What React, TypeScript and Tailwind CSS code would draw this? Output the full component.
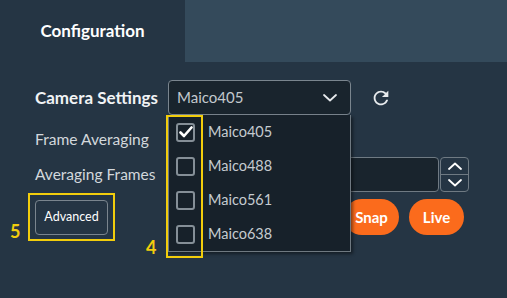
import React from 'react';
import { MdRefresh } from 'react-icons/md';

const options = ['Maico405', 'Maico488', 'Maico561', 'Maico638'];

function Chevron({ up = false, className = '' }: { up?: boolean; className?: string }) {
    return (
        <svg width="14" height="8" viewBox="0 0 14 8" className={className} fill="none">
            <polyline
                points={up ? '1,7 7,1.5 13,7' : '1,1 7,6.5 13,1'}
                stroke="currentColor"
                strokeWidth="1.8"
                strokeLinecap="round"
                strokeLinejoin="round"
            />
        </svg>
    );
}

function Checkbox({ checked }: { checked: boolean }) {
    return (
        <div className="w-[19px] h-[19px] rounded-[3px] border-2 border-[#858f97] flex items-center justify-center">
            {checked && (
                <svg width="14" height="12" viewBox="0 0 14 12" fill="none">
                    <polyline points="1.5,6.5 5,10 12.5,1.5" stroke="white" strokeWidth="2.6" strokeLinecap="round" strokeLinejoin="round" />
                </svg>
            )}
        </div>
    );
}

export default function App() {
    return (
        <div className="w-[507px] h-[298px] bg-[#253544] font-['Lato',sans-serif] relative overflow-hidden">
            <div className="flex h-[62px]">
                <div className="w-[185px] flex items-center justify-center text-[17px] font-bold text-white">Configuration</div>
                <div className="flex-1 bg-[#344a5b]" />
            </div>

            <div className="pl-[35px] pt-[18px] flex flex-col">
                <div className="flex items-center h-[35px]">
                    <div className="w-[133px] text-[17px] font-bold text-[#f1f3f5]">Camera Settings</div>
                    <div className="relative z-20">
                        <div className="w-[183px] h-[35px] rounded-[4px] border border-[#7a858e] bg-[#19242d] flex items-center justify-between pl-[8px] pr-[13px]">
                            <span className="text-[15px] text-[#c3c9ce]">Maico405</span>
                            <Chevron className="text-[#e6e9ec]" />
                        </div>
                        <div className="absolute left-0 top-full w-[183px] bg-[#17212a] border border-t-0 border-[#6f7981] shadow-[2px_2px_3px_rgba(0,0,0,0.45)]">
                            {options.map((o, i) => (
                                <div key={o} className="h-[34px] flex items-center pl-[7px] gap-[13px]">
                                    <Checkbox checked={i === 0} />
                                    <span className="text-[14.5px] text-[#c5cbd0]">{o}</span>
                                </div>
                            ))}
                        </div>
                    </div>
                    <MdRefresh size={22} className="ml-[19px] text-[#e8ebee]" />
                </div>

                <div className="flex items-center h-[34px] mt-[8px]">
                    <div className="text-[15.6px] text-[#d3d8dc]">Frame Averaging</div>
                </div>

                <div className="flex items-center h-[35px]">
                    <div className="w-[133px] text-[15.5px] text-[#d3d8dc]">Averaging Frames</div>
                    <div className="w-[271px] h-[35px] rounded-[4px] border border-[#6f7a83] bg-[#19242d]" />
                    <div className="ml-[1px] w-[29px] h-[35px] rounded-[4px] border border-[#6f7a83] flex flex-col">
                        <div className="flex-1 flex items-center justify-center border-b border-[#6f7a83]">
                            <Chevron up className="text-white" />
                        </div>
                        <div className="flex-1 flex items-center justify-center">
                            <Chevron className="text-white" />
                        </div>
                    </div>
                </div>

                <div className="flex items-center mt-[7px] h-[36px]">
                    <button className="w-[73px] h-[35px] rounded-[4px] border-[1.5px] border-[#7a858e] text-[12.5px] text-white">Advanced</button>
                    <button className="ml-[236px] w-[55px] h-[36px] rounded-full bg-[#fb6b1c] text-[15px] font-bold text-white">Snap</button>
                    <button className="ml-[10px] w-[55px] h-[36px] rounded-full bg-[#fb6b1c] text-[15px] font-bold text-white">Live</button>
                </div>
            </div>

            <div className="absolute left-[166px] top-[115px] w-[37px] h-[143px] border-2 border-[#f2cd0c] z-30" />
            <div className="absolute left-[146px] top-[238px] text-[18px] font-bold text-[#f2cd0c] leading-none">4</div>

            <div className="absolute left-[28px] top-[193px] w-[87px] h-[48px] border-2 border-[#f2cd0c]" />
            <div className="absolute left-[10px] top-[222px] text-[18px] font-bold text-[#f2cd0c] leading-none">5</div>
        </div>
    );
}
